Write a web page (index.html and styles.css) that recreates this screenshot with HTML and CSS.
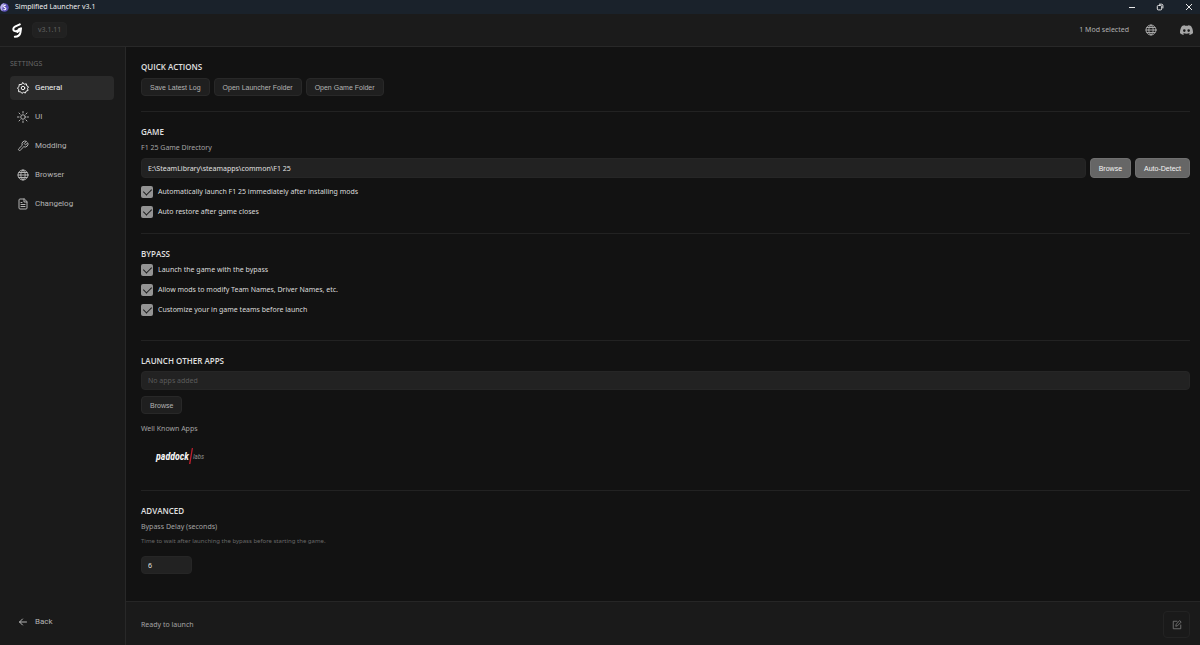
FILE: index.html
```html
<!DOCTYPE html>
<html lang="en">
<head>
<meta charset="utf-8">
<title>Simplified Launcher v3.1</title>
<link rel="stylesheet" href="styles.css">
</head>
<body>
<div class="titlebar">
  <svg class="app-icon" viewBox="0 0 20 20"><circle cx="10" cy="10" r="9.5" fill="#5b50b8"/><path d="M10 .5a9.500 9.500 0 0 0-4 18c-2-5 0-12 4-18z" fill="#b9b2ec"/><path d="M13 5c-4-1-6 2-4 4s5 1 4 4-4 2-5 1" fill="none" stroke="#fff" stroke-width="2.4"/></svg>
  <span class="app-name">Simplified Launcher v3.1</span>
  <button class="win-btn" aria-label="Minimize"><svg viewBox="0 0 8 8"><path d="M1 4.500h6"/></svg></button>
  <button class="win-btn" aria-label="Restore"><svg viewBox="0 0 8 8"><rect x="1.300" y="2.500" width="4.400" height="4.400" rx="1"/><path d="M3 1.200h2.600a1.300 1.300 0 0 1 1.300 1.300v2.800"/></svg></button>
  <button class="win-btn" aria-label="Close"><svg viewBox="0 0 8 8"><path d="M1 1l6 6M7 1L1 7"/></svg></button>
</div>
<header class="header">
  <svg class="brand" viewBox="0 0 10 15"><path d="M7.800 1.400 3 3.700C1 4.700.8 7 2.300 7.900c1.700.8 4-.2 5.100-2.100M9 5.300 8.400 9.500c-.5 2.700-2.700 4.300-5.600 4.300M5.400 9l3-3" /></svg>
  <span class="version">v3.1.11</span>
  <span class="mods">1 Mod selected</span>
  <button class="icon-btn" aria-label="Language"><svg class="ico" viewBox="0 0 24 24"><circle cx="12" cy="12" r="10"/><path d="M2 12h20M12 2c-6 6-6 14 0 20M12 2c6 6 6 14 0 20M4 7h16M4 17h16"/></svg></button>
  <button class="icon-btn discord" aria-label="Discord"><svg viewBox="0 0 24 18"><path fill="#a6a6a6" fill-rule="evenodd" d="M20.300 1.500A19.800 19.800 0 0 0 15.400 0l-.7 1.300a18 18 0 0 0-5.400 0L8.600 0a19.700 19.700 0 0 0-4.900 1.500C.6 6.200-.3 10.700.1 15.200a20 20 0 0 0 6 2.800l1.300-2-1.900-.9.500-.4c4 1.800 8 1.800 12 0l.5.400-1.900.9 1.300 2a20 20 0 0 0 6-2.800c.5-5.200-.8-9.700-3.600-13.700zM8 12.500a2.300 2.300 0 1 1 0-4.800 2.300 2.300 0 0 1 0 4.800zm8 0a2.300 2.300 0 1 1 0-4.800 2.300 2.300 0 0 1 0 4.800z"/></svg></button>
</header>
<div class="body">
  <nav class="sidebar">
    <div class="nav-title">SETTINGS</div>
    <button class="nav-item active"><svg class="ico" viewBox="0 0 24 24"><circle cx="12" cy="12" r="3.500"/><path d="M12 1.500l2.700 3 4-.9.800 4.100 3.500 2-2 3.300 1.200 3.900-4 1.300-1.400 3.900-3.700-1.500-3.300 2.200-2.600-3.200-4.100-.2.300-4.200L.9 11.800l3.200-2.500L4.300 5l4.200.1z"/></svg>General</button>
    <button class="nav-item"><svg class="ico" viewBox="0 0 24 24"><circle cx="12" cy="12" r="4.500"/><path d="M12 1v3M12 20v3M1 12h3M20 12h3M4 4l2.200 2.200M17.800 17.800 20 20M20 4l-2.200 2.200M6.200 17.800 4 20"/></svg>UI</button>
    <button class="nav-item"><svg class="ico" viewBox="0 0 24 24"><path d="M14.700 6.300a1 1 0 0 0 0 1.400l1.600 1.600a1 1 0 0 0 1.400 0l3.800-3.800a6 6 0 0 1-8 8l-6.900 6.900a2.100 2.100 0 0 1-3-3l6.900-6.900a6 6 0 0 1 8-8z"/></svg>Modding</button>
    <button class="nav-item"><svg class="ico" viewBox="0 0 24 24"><circle cx="12" cy="12" r="10"/><path d="M2 12h20M12 2c-6 6-6 14 0 20M12 2c6 6 6 14 0 20M4 7h16M4 17h16"/></svg>Browser</button>
    <button class="nav-item"><svg class="ico" viewBox="0 0 24 24"><path d="M14 2H6a2 2 0 0 0-2 2v16a2 2 0 0 0 2 2h12a2 2 0 0 0 2-2V8zM14 2v6h6M8 13h8M8 17h8M8 9h2"/></svg>Changelog</button>
    <button class="nav-item back"><svg class="ico" viewBox="0 0 24 24"><path d="M19 12H5M11 6l-6 6 6 6"/></svg>Back</button>
  </nav>
  <div class="content">
    <main class="main">
      <section class="section">
        <h2>QUICK ACTIONS</h2>
        <div class="row"><button class="btn">Save Latest Log</button><button class="btn">Open Launcher Folder</button><button class="btn">Open Game Folder</button></div>
      </section>
      <section class="section">
        <h2>GAME</h2>
        <label class="label" for="dir">F1 25 Game Directory</label>
        <div class="row path"><input class="field" id="dir" type="text" value="E:\SteamLibrary\steamapps\common\F1 25"><button class="btn primary">Browse</button><button class="btn primary">Auto-Detect</button></div>
        <div class="checks">
          <label class="check"><input type="checkbox" checked>Automatically launch F1 25 immediately after installing mods</label>
          <label class="check"><input type="checkbox" checked>Auto restore after game closes</label>
        </div>
      </section>
      <section class="section bypass">
        <h2>BYPASS</h2>
        <div class="checks">
          <label class="check"><input type="checkbox" checked>Launch the game with the bypass</label>
          <label class="check"><input type="checkbox" checked>Allow mods to modify Team Names, Driver Names, etc.</label>
          <label class="check"><input type="checkbox" checked>Customize your in game teams before launch</label>
        </div>
      </section>
      <section class="section">
        <h2>LAUNCH OTHER APPS</h2>
        <input class="field" type="text" placeholder="No apps added" aria-label="Apps">
        <div class="row"><button class="btn">Browse</button></div>
        <div class="label known">Well Known Apps</div>
        <a class="paddock" href="#"><b>paddock</b><svg viewBox="0 0 4 20"><path d="M0 17 2.800 1H4L1.400 17z" fill="#c4202f"/></svg><span>labs</span></a>
      </section>
      <section class="section">
        <h2>ADVANCED</h2>
        <label class="label" for="delay">Bypass Delay (seconds)</label>
        <p class="hint">Time to wait after launching the bypass before starting the game.</p>
        <input class="field delay" id="delay" type="text" value="6">
      </section>
    </main>
    <footer class="footer">
      <span>Ready to launch</span>
      <button class="edit" aria-label="Edit"><svg class="ico" viewBox="0 0 24 24"><path d="M12 3H3v18h18v-9"/><path d="M19 2l3 3-9 9-4 1 1-4z"/></svg></button>
    </footer>
  </div>
</div>
</body>
</html>
```
FILE: styles.css
```css
* { box-sizing: border-box; }
body {
  margin: 0;
  min-height: 100vh;
  display: flex;
  flex-direction: column;
  background: #121212;
  color: #d0d0d0;
  font: 7px/10px "Noto Sans", "Open Sans", sans-serif;
}
button, input { font-family: inherit; font-size: inherit; color: inherit; }
button { border: 0; padding: 0; background: none; font-family: "Liberation Sans", Arial, sans-serif; }
svg { display: block; }
.ico { width: 12px; height: 12px; fill: none; stroke: currentColor; stroke-width: 2; stroke-linecap: round; stroke-linejoin: round; }

.titlebar { display: flex; align-items: center; height: 14px; background: #1a222b; color: #f0f0f0; }
.app-icon { width: 9px; height: 9px; margin-right: 6px; }
.app-name { flex: 1; }
.win-btn { width: 28px; height: 14px; display: grid; place-items: center; }
.win-btn:last-child { width: 22px; margin-left: 4px; }
.win-btn svg { width: 8px; height: 8px; fill: none; stroke: #e8e8e8; stroke-width: 1; }

.header { display: flex; align-items: center; height: 33px; padding: 0 7px 0 12px; background: #1b1b1b; border-bottom: 1px solid #282828; }
.brand { width: 10px; height: 15px; fill: none; stroke: #fff; stroke-width: 2; stroke-linecap: round; stroke-linejoin: round; }
.version { margin-left: 10px; padding: 2px 5px; border: 1px solid #232323; border-radius: 4px; background: #212121; color: #626262; }
.mods { margin-left: auto; color: #b0b0b0; }
.icon-btn { margin-left: 16px; color: #a6a6a6; }
.discord { margin-left: 23px; }
.discord svg { width: 13px; height: 10px; }

.body { flex: 1; display: flex; }
.sidebar { width: 126px; flex: none; display: flex; flex-direction: column; padding: 12px 11px 11px 10px; background: #1a1a1a; border-right: 1px solid #282828; }
.nav-title { margin-bottom: 7px; color: #686868; }
.nav-item { display: flex; align-items: center; gap: 6px; height: 24px; margin-bottom: 5px; padding: 0 7px; border-radius: 4px; color: #b4b4b4; font: 8px/10px Roboto, "Liberation Sans", sans-serif; }
.active { background: #2a2a2a; color: #f0f0f0; }
.back { margin: auto 0 0; }

.content { flex: 1; display: flex; flex-direction: column; min-width: 0; }
.main { flex: 1; padding: 0 10px 0 15px; }
.section { padding: 15px 0; border-bottom: 1px solid #222; }
.section:last-child { border: 0; }
.bypass { padding-bottom: 24px; }
h2 { margin: 0 0 5px; font: 600 8px/10px "Open Sans", "Noto Sans", sans-serif; color: #e0e0e0; }
h2 + .row, h2 + .label { margin-top: 6px; }
.row { display: flex; gap: 4px; }
.btn { height: 18px; padding: 0 8px; border: 1px solid #282828; border-radius: 4px; background: #1f1f1f; color: #b4b4b4; }
.field { display: block; width: 100%; height: 19px; margin: 0; padding: 0 6px; border: 1px solid #262626; border-radius: 4px; background: #222; color: #e0e0e0; }
.field::placeholder { color: #5c5c5c; }
.field + .row { margin-top: 6px; }
.label { display: block; color: #a4a4a4; }
.path { margin-top: 5px; }
.path .field { flex: 1; width: auto; min-width: 0; height: 20px; }
.primary { height: 20px; border-color: #707070; background: #666; color: #f4f4f4; }
.checks { display: grid; gap: 8px; }
.path + .checks { margin-top: 8px; }
.check { display: flex; align-items: center; gap: 5px; height: 12px; color: #dcdcdc; }
.check input { appearance: none; display: grid; place-items: center; width: 12px; height: 12px; margin: 0; border-radius: 2px; background: #949494; }
.check input:checked::before { content: ""; width: 4px; height: 7px; margin: 0 0 2px 0; border: solid #1a1a1a; border-width: 0 1px 1px 0; transform: rotate(45deg); }
.known { margin: 10px 0 12px; }
.paddock { display: flex; align-items: center; width: 80px; height: 22px; margin-bottom: 7px; padding-left: 15px; color: #f4f4f4; text-decoration: none; font: italic 10px/20px "Roboto Condensed", "Open Sans Condensed", Roboto, sans-serif; }
.paddock b { font-weight: 700; }
.paddock svg { width: 4px; height: 20px; }
.paddock span { color: #8c8c8c; font-size: 7px; }
.hint { margin: 4px 0 10px; color: #686868; font-size: 6px; }
.delay { width: 51px; height: 18px; }

.footer { display: flex; align-items: center; justify-content: space-between; height: 44px; padding: 2px 10px 0 15px; background: #1a1a1a; border-top: 1px solid #262626; color: #a4a4a4; }
.edit { width: 27px; height: 27px; display: grid; place-items: center; border: 1px solid #232323; border-radius: 4px; color: #7c7c7c; }
.edit .ico { width: 10px; height: 10px; }
```
